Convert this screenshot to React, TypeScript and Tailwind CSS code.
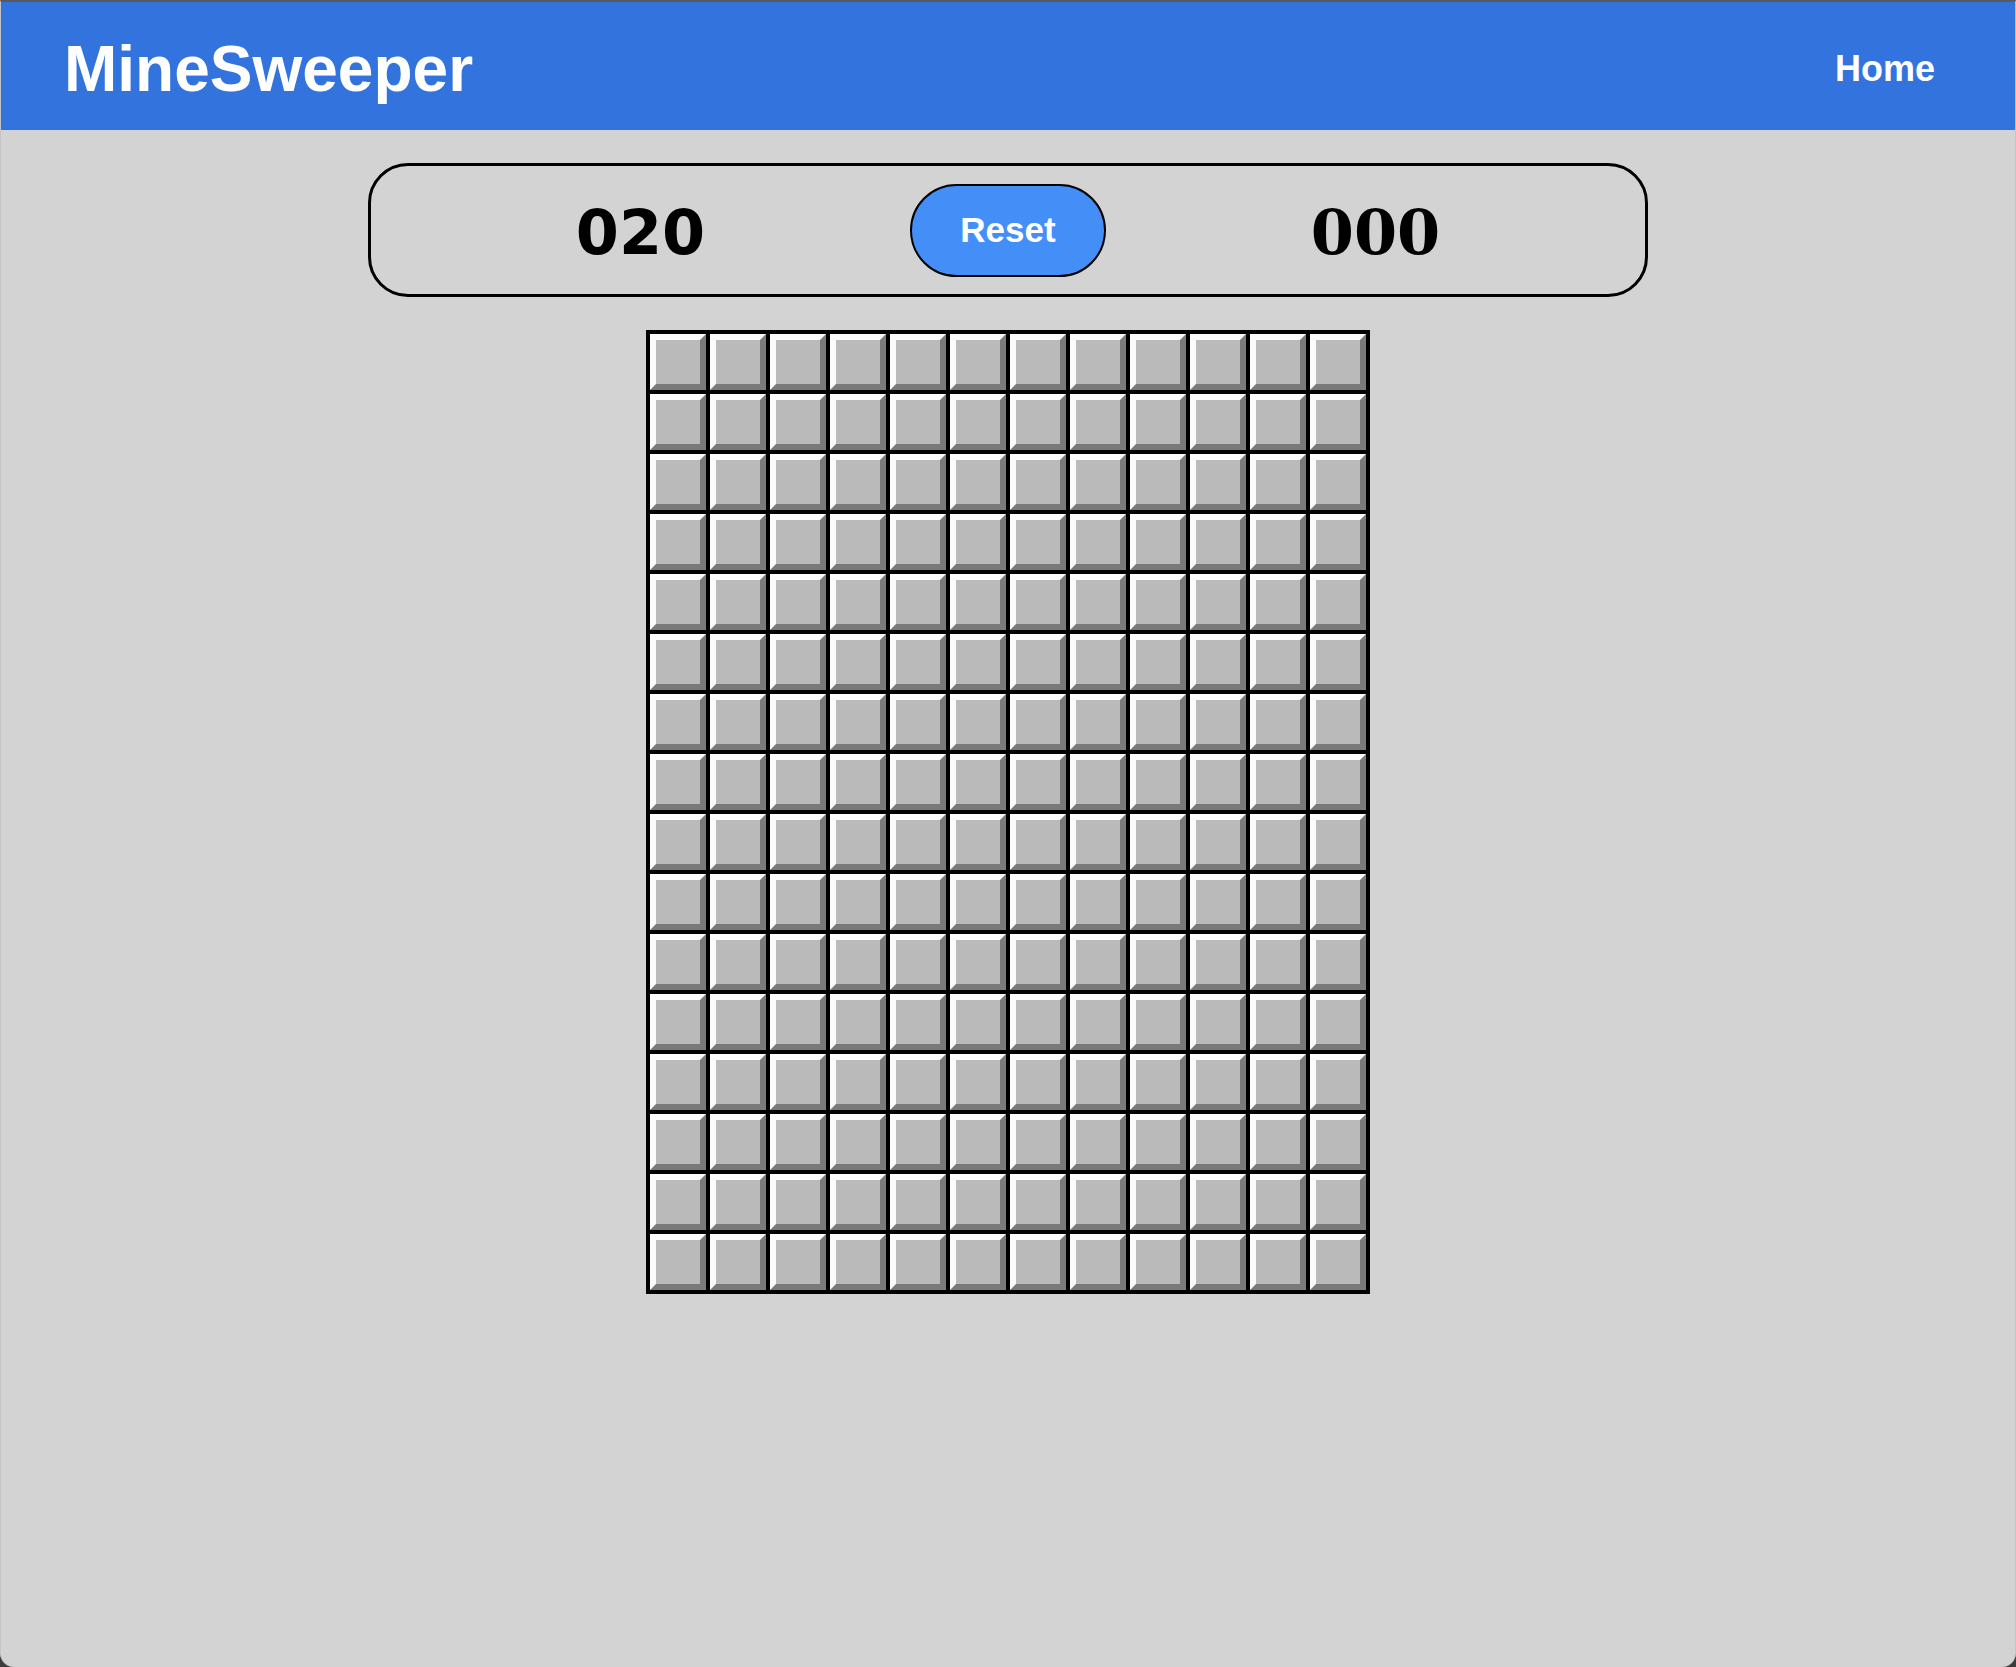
import React from 'react';

const ROWS = 16;
const COLS = 12;

// one untouched cell: raised bevel look
const Cell = () => (
    <div className="w-[56px] h-[56px] bg-[#bababa] border-[6px] border-t-[#fbfbfb] border-l-[#fbfbfb] border-b-[#7a7a7a] border-r-[#7a7a7a]" />
);

export default function App() {
    const cells = Array.from({ length: ROWS * COLS }, (_, i) => i);

    return (
        <div className="w-full h-[1667px] bg-[#3c3c3c]">
            <div className="h-full flex flex-col bg-[#d3d3d3] rounded-b-[14px] overflow-hidden border-t-2 border-t-[#5a5a5a] border-x border-x-[#c4c4c4]">
                {/* header */}
                <header className="h-[128px] shrink-0 bg-[#3373de] flex items-center justify-between pl-[63px] pr-[80px] pt-[6px] font-['Liberation_Sans',Arial,sans-serif] text-white font-bold">
                    <h1 className="text-[64px] leading-none">MineSweeper</h1>
                    <a className="text-[36px] leading-none cursor-pointer">Home</a>
                </header>

                <main className="flex flex-col items-center">
                    {/* counters */}
                    <div className="mt-[33px] w-[1280px] h-[134px] border-[3px] border-black rounded-[40px] flex items-center justify-evenly">
                        <span className="font-['DejaVu_Sans',sans-serif] font-bold text-[62px] leading-none text-black pt-[6px]">020</span>
                        <button className="w-[196px] h-[93px] rounded-full bg-[#448ef7] border-2 border-black text-white font-bold text-[35px] font-['Liberation_Sans',Arial,sans-serif]">
                            Reset
                        </button>
                        <span className="font-['DejaVu_Serif',serif] font-bold text-[62px] leading-none text-black pt-[6px]">000</span>
                    </div>

                    {/* board */}
                    <div className="mt-[33px] border-4 border-black bg-black grid grid-cols-[repeat(12,56px)] gap-[4px]">
                        {cells.map(i => (
                            <Cell key={i} />
                        ))}
                    </div>
                </main>
            </div>
        </div>
    );
}
